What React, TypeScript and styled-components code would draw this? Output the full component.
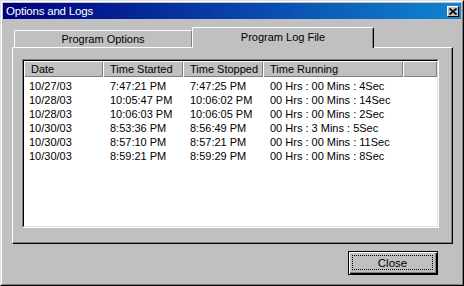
import React from "react";
import styled, { createGlobalStyle } from "styled-components";

const Global = createGlobalStyle`
  html, body { margin: 0; padding: 0; background: #c0c0c0; }
  body {
    font-family: "Liberation Sans", Arial, sans-serif;
    font-size: 11px;
    color: #000;
  }
  * { box-sizing: border-box; }
`;

const Window = styled.div`
  width: 464px;
  height: 286px;
  background: #c0c0c0;
  border: 1px solid;
  border-color: #dfdfdf #000 #000 #dfdfdf;
  display: flex;
  flex-direction: column;
`;

const Frame = styled.div`
  flex: 1;
  min-height: 0;
  display: flex;
  flex-direction: column;
  border: 1px solid;
  border-color: #fff #808080 #808080 #fff;
  padding: 1px;
`;

const TitleBar = styled.div`
  height: 16px;
  flex: none;
  display: flex;
  align-items: center;
  justify-content: space-between;
  background: linear-gradient(to right, #000080, #1084d0);
  color: #fff;
  font-size: 11.5px;
  padding: 0 2px 0 3px;
`;

const TitleText = styled.span`
  line-height: 16px;
  white-space: nowrap;
  letter-spacing: -0.2px;
`;

const TitleButton = styled.div`
  width: 12px;
  height: 11px;
  background: #c0c0c0;
  border: 1px solid;
  border-color: #fff #000 #000 #fff;
  display: flex;
  align-items: center;
  justify-content: center;
`;

const Body = styled.div`
  flex: 1;
  min-height: 0;
  display: flex;
  flex-direction: column;
  padding: 8px 8px 8px 9px;
`;

const TabStrip = styled.div`
  height: 20px;
  flex: none;
  display: flex;
  align-items: flex-end;
  padding-left: 2px;
  position: relative;
  z-index: 1;
`;

const Tab = styled.div<{ $active?: boolean }>`
  width: ${(p) => (p.$active ? 182 : 178)}px;
  height: ${(p) => (p.$active ? 21 : 17)}px;
  margin-bottom: ${(p) => (p.$active ? -1 : 0)}px;
  background: #c0c0c0;
  border-top: 1px solid #fff;
  border-left: 1px solid #fff;
  border-right: 1px solid ${(p) => (p.$active ? "#000" : "#808080")};
  border-top-left-radius: 2px;
  border-top-right-radius: 2px;
  box-shadow: ${(p) => (p.$active ? "inset -1px 0 #808080" : "none")};
  display: flex;
  align-items: center;
  justify-content: center;
  padding-bottom: ${(p) => (p.$active ? 3 : 0)}px;
  font-size: 11px;
  white-space: nowrap;
`;

const Panel = styled.div`
  flex: 1;
  min-height: 0;
  display: flex;
  border: 1px solid;
  border-color: #fff #000 #000 #fff;
  box-shadow: inset -1px -1px #808080;
  padding: 11px 13px 15px 9px;
`;

const ListOuter = styled.div`
  flex: 1;
  display: flex;
  border: 1px solid;
  border-color: #808080 #fff #fff #808080;
`;

const ListInner = styled.div`
  flex: 1;
  display: flex;
  flex-direction: column;
  background: #fff;
  border: 1px solid;
  border-color: #000 #dfdfdf #dfdfdf #000;
`;

const cols = "79px 80px 80px 140px 1fr";

const HeaderRow = styled.div`
  display: grid;
  grid-template-columns: ${cols};
  height: 16px;
  flex: none;
`;

const HeaderCell = styled.div`
  background: #c0c0c0;
  box-shadow: inset 1px 1px #fff, inset -1px -1px #808080;
  padding-left: 7px;
  line-height: 16px;
  white-space: nowrap;
  overflow: hidden;
`;

const Rows = styled.div`
  padding-top: 2px;
  display: flex;
  flex-direction: column;
`;

const Row = styled.div`
  display: grid;
  grid-template-columns: ${cols};
  height: 14px;
`;

const Cell = styled.div<{ $first?: boolean }>`
  padding-left: ${(p) => (p.$first ? 5 : 7)}px;
  line-height: 14px;
  white-space: nowrap;
`;

const Footer = styled.div`
  flex: none;
  display: flex;
  justify-content: flex-end;
  padding-top: 7px;
  padding-right: 15px;
`;

const Button = styled.div`
  width: 90px;
  height: 24px;
  border: 1px solid #000;
  background: #c0c0c0;
  box-shadow: inset 1px 1px #fff, inset -1px -1px #000, inset -2px -2px #808080;
  padding: 3px 4px 4px 3px;
  display: flex;
`;

const Focus = styled.div`
  flex: 1;
  border: 1px dotted #000;
  display: flex;
  align-items: center;
  justify-content: center;
  font-size: 11.5px;
`;

const rows = [
  ["10/27/03", "7:47:21 PM", "7:47:25 PM", "00 Hrs : 00 Mins : 4Sec"],
  ["10/28/03", "10:05:47 PM", "10:06:02 PM", "00 Hrs : 00 Mins : 14Sec"],
  ["10/28/03", "10:06:03 PM", "10:06:05 PM", "00 Hrs : 00 Mins : 2Sec"],
  ["10/30/03", "8:53:36 PM", "8:56:49 PM", "00 Hrs : 3 Mins : 5Sec"],
  ["10/30/03", "8:57:10 PM", "8:57:21 PM", "00 Hrs : 00 Mins : 11Sec"],
  ["10/30/03", "8:59:21 PM", "8:59:29 PM", "00 Hrs : 00 Mins : 8Sec"],
];

export default function App() {
  return (
    <>
      <Global />
      <Window>
        <Frame>
          <TitleBar>
            <TitleText>Options and Logs</TitleText>
            <TitleButton>
              <svg width="8" height="7" viewBox="0 0 8 7">
                <path d="M0.5 0.5 L7.5 6.5 M7.5 0.5 L0.5 6.5" stroke="#000" strokeWidth="1.6" />
              </svg>
            </TitleButton>
          </TitleBar>
          <Body>
            <TabStrip>
              <Tab>Program Options</Tab>
              <Tab $active>Program Log File</Tab>
            </TabStrip>
            <Panel>
              <ListOuter>
                <ListInner>
                  <HeaderRow>
                    <HeaderCell>Date</HeaderCell>
                    <HeaderCell>Time Started</HeaderCell>
                    <HeaderCell>Time Stopped</HeaderCell>
                    <HeaderCell>Time Running</HeaderCell>
                    <HeaderCell />
                  </HeaderRow>
                  <Rows>
                    {rows.map((r, i) => (
                      <Row key={i}>
                        {r.map((c, j) => (
                          <Cell key={j} $first={j === 0}>
                            {c}
                          </Cell>
                        ))}
                        <Cell />
                      </Row>
                    ))}
                  </Rows>
                </ListInner>
              </ListOuter>
            </Panel>
            <Footer>
              <Button>
                <Focus>Close</Focus>
              </Button>
            </Footer>
          </Body>
        </Frame>
      </Window>
    </>
  );
}
